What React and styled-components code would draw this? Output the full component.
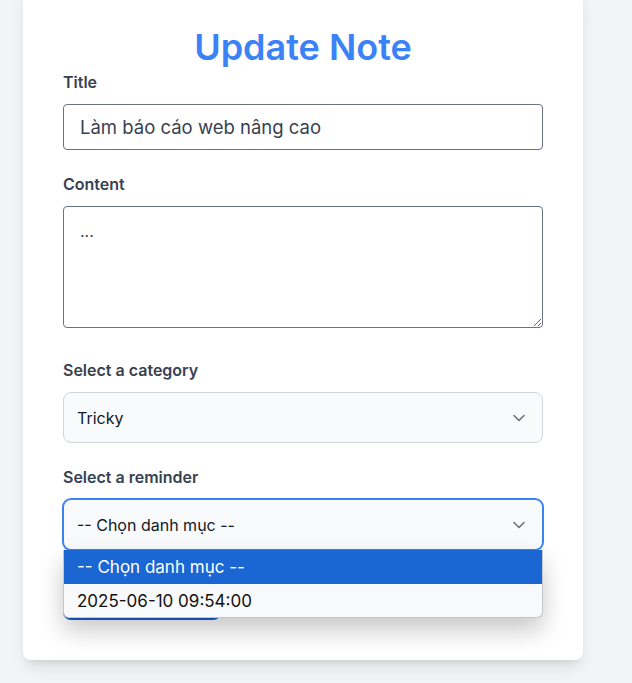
import React from 'react';
import styled, { createGlobalStyle } from 'styled-components';

const GlobalStyle = createGlobalStyle`
	html, body {
		margin: 0;
		padding: 0;
		background: #f3f4f6;
		font-family: Inter, "Noto Sans", "Liberation Sans", sans-serif;
	}
	* {
		box-sizing: border-box;
	}
`;

const Page = styled.div`
	min-height: 683px;
	padding-left: 23px;
	overflow: hidden;
`;

const Card = styled.form`
	width: 560px;
	margin-top: -13px;
	padding: 40px;
	background: #ffffff;
	border-radius: 8px;
	box-shadow: 0 10px 15px -3px rgba(0, 0, 0, 0.1), 0 4px 6px -4px rgba(0, 0, 0, 0.1);
	display: flex;
	flex-direction: column;
`;

const Heading = styled.h1`
	margin: 0 0 5px;
	text-align: center;
	font-size: 36px;
	line-height: 40px;
	font-weight: 600;
	color: #3b82f6;
`;

const Label = styled.label`
	display: block;
	font-size: 16px;
	line-height: 20px;
	font-weight: 600;
	color: #374151;
	margin-bottom: 12px;
`;

const Field = styled.div`
	margin-bottom: ${p => p.$gap || 24}px;
	position: relative;
`;

const TextInput = styled.input`
	display: block;
	width: 100%;
	height: 46px;
	padding: 0 16px;
	font-family: inherit;
	font-size: 18.5px;
	color: #374151;
	border: 1px solid #6b7280;
	border-radius: 4px;
	outline: none;
`;

const TextArea = styled.textarea`
	display: block;
	width: 100%;
	height: 122px;
	padding: 12px 16px;
	font-family: inherit;
	font-size: 16px;
	line-height: 24px;
	color: #374151;
	border: 1px solid #6b7280;
	border-radius: 4px;
	outline: none;
`;

const SelectBox = styled.div`
	display: flex;
	align-items: center;
	justify-content: space-between;
	height: 51px;
	padding: 0 16px 0 13px;
	background: #f9fafb;
	border: 1px solid ${p => (p.$focused ? '#3b82f6' : '#d1d5db')};
	box-shadow: ${p => (p.$focused ? '0 0 0 1px #3b82f6' : 'none')};
	border-radius: 8px;
	font-size: 16px;
	color: #111827;
`;

const Chevron = styled.svg`
	width: 14px;
	height: 14px;
	color: #6b7280;
`;

const Menu = styled.ul`
	position: absolute;
	left: 0;
	right: 0;
	top: 100%;
	margin: 0;
	padding: 0;
	list-style: none;
	background: #f8f9fa;
	border: 1px solid #c4c7cc;
	border-top: none;
	border-radius: 0 0 6px 6px;
	overflow: hidden;
	box-shadow: 0 12px 24px rgba(0, 0, 0, 0.22);
	z-index: 5;
`;

const Option = styled.li`
	height: ${p => p.$h}px;
	display: flex;
	align-items: center;
	padding-left: 13px;
	font-size: 17px;
	background: ${p => (p.$active ? '#1a67d3' : 'transparent')};
	color: ${p => (p.$active ? '#ffffff' : '#111111')};
`;

const SubmitButton = styled.button`
	align-self: flex-start;
	width: 158px;
	height: 46px;
	border: none;
	border-radius: 8px;
	background: #1a5fd0;
	color: #ffffff;
	font-family: inherit;
	font-size: 16px;
	font-weight: 500;
`;

const ChevronDown = () => (
	<Chevron viewBox="0 0 14 14" fill="none">
		<path d="M2 4.5 L7 9.5 L12 4.5" stroke="currentColor" strokeWidth="1.6" strokeLinecap="round" strokeLinejoin="round" />
	</Chevron>
);

const Select = ({ value, focused, options }) => (
	<>
		<SelectBox $focused={focused}>
			<span>{value}</span>
			<ChevronDown />
		</SelectBox>
		{options && (
			<Menu>
				{options.map((o, i) => (
					<Option key={o} $active={i === 0} $h={i === 0 ? 34 : 33}>{o}</Option>
				))}
			</Menu>
		)}
	</>
);

const App = () => (
	<Page>
		<GlobalStyle />
		<Card onSubmit={e => e.preventDefault()}>
			<Heading>Update Note</Heading>
			<Field>
				<Label>Title</Label>
				<TextInput defaultValue="Làm báo cáo web nâng cao" />
			</Field>
			<Field $gap={32}>
				<Label>Content</Label>
				<TextArea defaultValue="..." />
			</Field>
			<Field>
				<Label>Select a category</Label>
				<Select value="Tricky" />
			</Field>
			<Field>
				<Label>Select a reminder</Label>
				<Select
					focused
					value="-- Chọn danh mục --"
					options={['-- Chọn danh mục --', '2025-06-10 09:54:00']}
				/>
			</Field>
			<SubmitButton type="submit">Update</SubmitButton>
		</Card>
	</Page>
);

export default App;
